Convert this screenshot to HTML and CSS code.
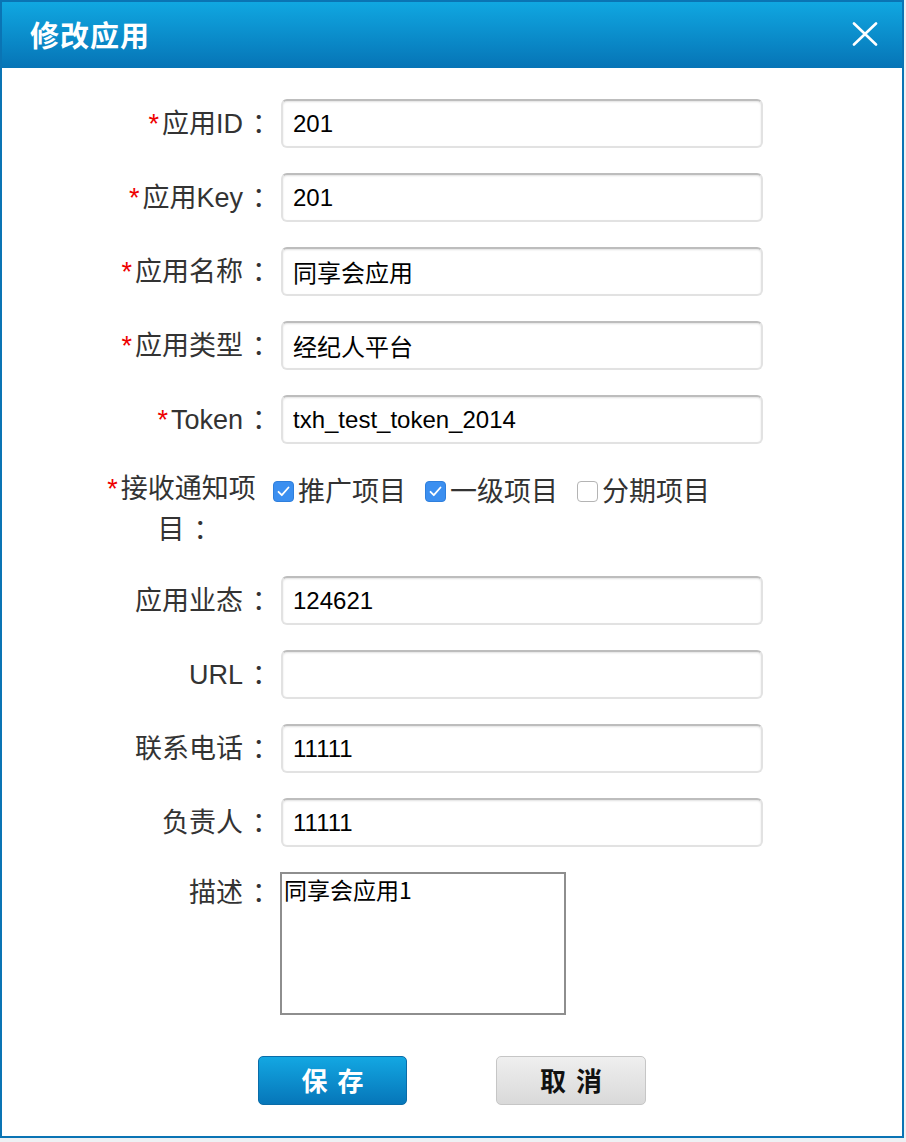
FILE: index.html
```html
<!DOCTYPE html>
<html lang="zh-CN">
<head>
<meta charset="utf-8">
<title>修改应用</title>
<link rel="stylesheet" href="styles.css">
</head>
<body>
<div class="dialog">
  <div class="dialog-header">
    <h1 class="dialog-title">修改应用</h1>
    <button class="dialog-close" type="button" aria-label="关闭">
      <svg width="26" height="24" viewBox="0 0 26 24"><path d="M2 1.5 L24 22.5 M24 1.5 L2 22.5" stroke="#fff" stroke-width="2.6" stroke-linecap="round"/></svg>
    </button>
  </div>
  <form class="form">
    <label class="f-label"><span class="req">*</span>应用ID<span class="colon">：</span></label>
    <div class="f-field"><input class="f-input" type="text" value="201"></div>

    <label class="f-label"><span class="req">*</span>应用Key<span class="colon">：</span></label>
    <div class="f-field"><input class="f-input" type="text" value="201"></div>

    <label class="f-label"><span class="req">*</span>应用名称<span class="colon">：</span></label>
    <div class="f-field"><input class="f-input" type="text" value="同享会应用"></div>

    <label class="f-label"><span class="req">*</span>应用类型<span class="colon">：</span></label>
    <div class="f-field"><input class="f-input" type="text" value="经纪人平台"></div>

    <label class="f-label"><span class="req">*</span>Token<span class="colon">：</span></label>
    <div class="f-field"><input class="f-input" type="text" value="txh_test_token_2014"></div>

    <div class="f-label f-label-wrap">
      <span class="wrap-line"><span class="req">*</span>接收通知项</span>
      <span class="wrap-line wrap-line-2">目<span class="colon">：</span></span>
    </div>
    <div class="f-field f-checks">
      <span class="opt"><span class="cb cb-on"><svg width="13" height="11" viewBox="0 0 13 11"><path d="M1.5 5.8 L4.8 9.2 L11.5 1.5" fill="none" stroke="#fff" stroke-width="1.8" stroke-linecap="round" stroke-linejoin="round"/></svg></span>推广项目</span>
      <span class="opt"><span class="cb cb-on"><svg width="13" height="11" viewBox="0 0 13 11"><path d="M1.5 5.8 L4.8 9.2 L11.5 1.5" fill="none" stroke="#fff" stroke-width="1.8" stroke-linecap="round" stroke-linejoin="round"/></svg></span>一级项目</span>
      <span class="opt"><span class="cb"></span>分期项目</span>
    </div>

    <label class="f-label">应用业态<span class="colon">：</span></label>
    <div class="f-field"><input class="f-input" type="text" value="124621"></div>

    <label class="f-label">URL<span class="colon">：</span></label>
    <div class="f-field"><input class="f-input" type="text" value=""></div>

    <label class="f-label">联系电话<span class="colon">：</span></label>
    <div class="f-field"><input class="f-input" type="text" value="11111"></div>

    <label class="f-label">负责人<span class="colon">：</span></label>
    <div class="f-field"><input class="f-input" type="text" value="11111"></div>

    <label class="f-label f-label-top">描述<span class="colon">：</span></label>
    <div class="f-field"><textarea class="f-text">同享会应用1</textarea></div>
  </form>
  <div class="actions">
    <button class="btn btn-primary" type="button">保 存</button>
    <button class="btn btn-default" type="button">取 消</button>
  </div>
</div>
</body>
</html>
```
FILE: styles.css
```css
* { box-sizing: border-box; }
html, body { margin: 0; padding: 0; }
body {
  background: #eef1f4;
  font-family: "Liberation Sans", "Noto Sans CJK SC", sans-serif;
  width: 906px;
  height: 1142px;
  overflow: hidden;
}
.dialog {
  width: 904px;
  border: 2px solid #0a74b4;
  background: #fff;
  padding-bottom: 31px;
}
.dialog-header {
  height: 66px;
  background: linear-gradient(#10a7e1, #0674b6);
  display: flex;
  align-items: center;
  justify-content: space-between;
  padding: 0 24px 0 28px;
}
.dialog-title {
  margin: 0;
  color: #fff;
  font-family: "Noto Sans CJK SC", sans-serif;
  font-weight: 700;
  font-size: 29px;
  letter-spacing: 1px;
  line-height: 1;
  padding-bottom: 2px;
}
.dialog-close {
  background: none;
  border: 0;
  padding: 0;
  display: flex;
  margin-bottom: 2px;
}
.form {
  display: grid;
  grid-template-columns: 169px 500px;
  row-gap: 25px;
  padding: 31px 0 0 99px;
}
.f-label {
  align-self: center;
  text-align: right;
  font-size: 27px;
  color: #333;
  line-height: 42px;
  height: 42px;
  white-space: nowrap;
}
.colon {
  display: inline-block;
  width: 27px;
  padding-left: 9px;
  overflow: visible;
}
.f-label-wrap {
  height: 82px;
  line-height: 41px;
  align-self: start;
  display: flex;
  flex-direction: column;
  align-items: center;
  padding-right: 8px;
}
.wrap-line {
  display: block;
  height: 41px;
}
.wrap-line-2 {
  padding-left: 6px;
}
.f-label-top {
  align-self: start;
}
.req {
  color: #ee0000;
  margin-right: 3px;
}
.f-field {
  display: flex;
  align-items: flex-start;
}
.f-input {
  margin: 0 0 0 11px;
  width: 482px;
  height: 49px;
  border: 2px solid #e2e2e2;
  border-top-color: #bdbdbd;
  border-radius: 6px;
  box-shadow: inset 0 1px 2px rgba(0,0,0,0.12);
  padding: 0 10px;
  font-family: "Liberation Sans", "Noto Sans CJK SC", sans-serif;
  font-size: 24px;
  color: #000;
  outline: none;
}
.f-checks {
  align-items: center;
  height: 41px;
  font-size: 27px;
  color: #333;
}
.opt {
  display: inline-flex;
  align-items: center;
  margin-right: 19px;
  margin-left: 3px;
  white-space: nowrap;
}
.opt + .opt { margin-left: 0; }
.cb {
  width: 21px;
  height: 21px;
  border-radius: 4px;
  border: 1px solid #b4b4b4;
  background: #fff;
  margin-right: 4px;
  margin-top: 3px;
  display: inline-flex;
  align-items: center;
  justify-content: center;
}
.cb-on {
  background: #3b8ff0;
  border-color: #2f7fdc;
}
.f-text {
  margin: 0 0 0 10px;
  width: 286px;
  height: 143px;
  border: 2px solid #8e8e8e;
  border-radius: 0;
  padding: 1px 2px;
  font-family: "Noto Sans CJK SC", sans-serif;
  font-size: 23px;
  line-height: 1.25;
  color: #000;
  resize: none;
  outline: none;
}
.actions {
  display: flex;
  justify-content: center;
  gap: 89px;
  margin-top: 41px;
}
.btn {
  width: 149px;
  height: 49px;
  border-radius: 5px;
  font-family: "Noto Sans CJK SC", sans-serif;
  font-weight: 700;
  font-size: 26px;
  line-height: 1;
  word-spacing: 4px;
  padding: 0 0 2px;
  cursor: pointer;
}
.btn-primary {
  background: linear-gradient(#13a7e2, #0676b9);
  border: 1px solid #0a6ca8;
  color: #fff;
}
.btn-default {
  width: 150px;
  background: linear-gradient(#efefef, #d9d9d9);
  border: 1px solid #c6c6c6;
  color: #111;
}
```
